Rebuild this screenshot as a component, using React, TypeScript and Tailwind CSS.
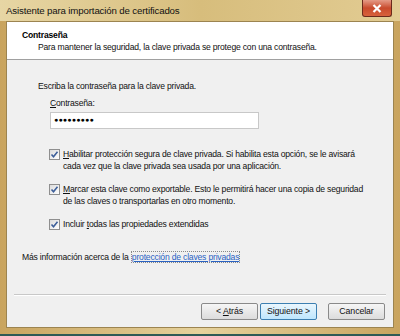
import React from 'react';

const font = { fontFamily: '"Liberation Sans", Arial, sans-serif' };

const Check = ({ children }: { children: React.ReactNode }) => (
  <div className="flex items-start gap-[3px]">
    <div className="mt-[1px] w-[11px] h-[11px] shrink-0 border border-[#8f8f8f] bg-gradient-to-br from-[#dcdcdc] to-white flex items-center justify-center">
      <svg width="9" height="9" viewBox="0 0 9 9">
        <path d="M1.5 4.5 L3.5 6.8 L7.5 1.8" fill="none" stroke="#3d5f9a" strokeWidth="1.6" />
      </svg>
    </div>
    <p className="leading-[12px] text-[#111] whitespace-nowrap">{children}</p>
  </div>
);

const Btn = ({ children, primary }: { children: React.ReactNode; primary?: boolean }) => (
  <button
    className={
      'w-[57px] h-[17px] rounded-[2px] border text-[8.8px] tracking-[-0.1px] leading-none flex items-center justify-center ' +
      (primary
        ? 'border-[#3c7fb1] bg-gradient-to-b from-[#eaf6fd] to-[#bee6fd] text-[#111]'
        : 'border-[#8a8a8a] bg-gradient-to-b from-[#f6f6f6] to-[#dcdcdc] text-[#111]')
    }
  >
    {children}
  </button>
);

export default function App() {
  return (
    <div style={font} className="w-[400px] h-[336px] flex flex-col bg-gradient-to-r from-[#c9a45e] via-[#e6d29c] to-[#c9a45e] overflow-hidden">
      <div className="h-[21px] shrink-0 flex items-start justify-between bg-gradient-to-r from-[#e7d6a4] via-[#d7bd7c] to-[#e2cc93]">
        <span className="pl-[6px] pt-[6px] text-[9.7px] tracking-[-0.15px] leading-none text-[#111]">Asistente para importación de certificados</span>
        <div className="mr-[8px] w-[30px] h-[17px] rounded-b-[3px] border border-t-0 border-[#6b2a1c] bg-gradient-to-b from-[#e49a86] via-[#c84a2c] to-[#d8623c] flex items-center justify-center">
          <svg width="10" height="9" viewBox="0 0 10 9">
            <path d="M1.5 1 L8.5 8 M8.5 1 L1.5 8" stroke="white" strokeWidth="2.2" />
          </svg>
        </div>
      </div>

      <div className="mx-[6px] h-[307px] shrink-0 flex flex-col border border-[#9c8450] bg-[#f0f0f0] text-[8.6px] tracking-[-0.2px]">
        <div className="h-[38px] shrink-0 bg-white border-b border-[#a0a0a0] pl-[15px] pt-[7px]">
          <p className="leading-[12px] font-bold text-[#000]">Contraseña</p>
          <p className="pl-[16px] leading-[12px] text-[#111]">Para mantener la seguridad, la clave privada se protege con una contraseña.</p>
        </div>

        <div className="flex-1 flex flex-col">
          <div className="pl-[31px] pt-[20px]">
            <p className="leading-[12px] text-[#111]">Escriba la contraseña para la clave privada.</p>
            <p className="pl-[12px] pt-[5px] leading-[12px] text-[#111]"><u>C</u>ontraseña:</p>
            <div className="ml-[12px] mt-[3px] w-[209px] h-[17px] bg-white border border-[#c8c8c8] flex items-center pl-[3px] text-[7px] tracking-[0.2px] text-black">
              ●●●●●●●●●
            </div>
          </div>

          <div className="pl-[42px] pt-[19px] pr-[10px] flex flex-col gap-[11px]">
            <Check>
              <u>H</u>abilitar protección segura de clave privada. Si habilita esta opción, se le avisará
              <br />cada vez que la clave privada sea usada por una aplicación.
            </Check>
            <Check>
              <u>M</u>arcar esta clave como exportable. Esto le permitirá hacer una copia de seguridad
              <br />de las claves o transportarlas en otro momento.
            </Check>
            <Check>
              Incluir <u>t</u>odas las propiedades extendidas
            </Check>
          </div>

          <p className="pl-[15px] pt-[21px] leading-[12px] text-[#111]">
            Más información acerca de la{' '}
            <span className="border border-dotted border-[#888] text-[#2a63c4] underline">protección de claves privadas</span>
          </p>

          <div className="flex-1" />
          <div className="mx-[7px] border-t border-[#c8c8c8] border-b-white border-b" />
          <div className="h-[31px] flex items-center justify-end pr-[8px]">
            <Btn><span>&lt; <u>A</u>trás</span></Btn>
            <div className="w-[2px]" />
            <Btn primary>Siguiente &gt;</Btn>
            <div className="w-[11px]" />
            <Btn>Cancelar</Btn>
          </div>
        </div>
      </div>
      <div className="flex-1 border-b-[2px] border-[#2f5a55]" />
    </div>
  );
}
